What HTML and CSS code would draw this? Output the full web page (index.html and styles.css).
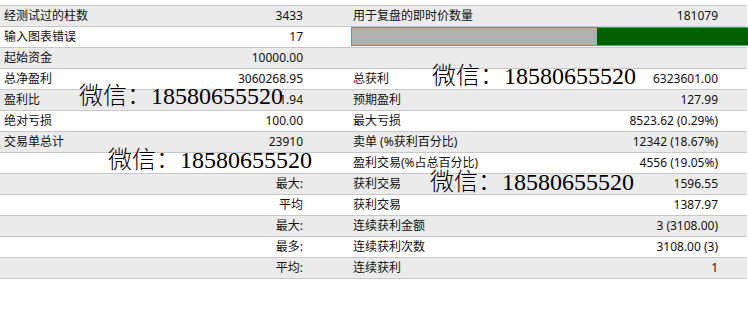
FILE: index.html
```html
<!DOCTYPE html>
<html lang="zh-CN">
<head>
<meta charset="utf-8">
<title>测试报告</title>
<link rel="stylesheet" href="styles.css">
</head>
<body>
<div class="page">
  <div class="report">
    <div class="row alt"><span class="lbl">经测试过的柱数</span><span class="val">3433</span><span class="gap"></span><span class="lbl2">用于复盘的即时价数量</span><span class="val2">181079</span><span class="rest"></span></div>
    <div class="row"><span class="lbl">输入图表错误</span><span class="val">17</span><span class="gap"></span><div class="bar"><div class="bar-gray"></div><div class="bar-green"></div></div></div>
    <div class="row alt"><span class="lbl">起始资金</span><span class="val">10000.00</span><span class="gap"></span><span class="lbl2"></span><span class="val2"></span><span class="rest"></span></div>
    <div class="row"><span class="lbl">总净盈利</span><span class="val">3060268.95</span><span class="gap"></span><span class="lbl2">总获利</span><span class="val2">6323601.00</span><span class="rest"></span></div>
    <div class="row alt"><span class="lbl">盈利比</span><span class="val">1.94</span><span class="gap"></span><span class="lbl2">预期盈利</span><span class="val2">127.99</span><span class="rest"></span></div>
    <div class="row"><span class="lbl">绝对亏损</span><span class="val">100.00</span><span class="gap"></span><span class="lbl2">最大亏损</span><span class="val2">8523.62 (0.29%)</span><span class="rest"></span></div>
    <div class="row alt"><span class="lbl">交易单总计</span><span class="val">23910</span><span class="gap"></span><span class="lbl2">卖单 (%获利百分比)</span><span class="val2">12342 (18.67%)</span><span class="rest"></span></div>
    <div class="row"><span class="lbl"></span><span class="val"></span><span class="gap"></span><span class="lbl2">盈利交易(%占总百分比)</span><span class="val2">4556 (19.05%)</span><span class="rest"></span></div>
    <div class="row alt"><span class="lbl"></span><span class="val">最大:</span><span class="gap"></span><span class="lbl2">获利交易</span><span class="val2">1596.55</span><span class="rest"></span></div>
    <div class="row"><span class="lbl"></span><span class="val">平均</span><span class="gap"></span><span class="lbl2">获利交易</span><span class="val2">1387.97</span><span class="rest"></span></div>
    <div class="row alt"><span class="lbl"></span><span class="val">最大:</span><span class="gap"></span><span class="lbl2">连续获利金额</span><span class="val2">3 (3108.00)</span><span class="rest"></span></div>
    <div class="row"><span class="lbl"></span><span class="val">最多:</span><span class="gap"></span><span class="lbl2">连续获利次数</span><span class="val2">3108.00 (3)</span><span class="rest"></span></div>
    <div class="row alt"><span class="lbl"></span><span class="val">平均:</span><span class="gap"></span><span class="lbl2">连续获利</span><span class="val2">1</span><span class="rest"></span></div>
  </div>
  <div class="wm wm1">微信：18580655520</div>
  <div class="wm wm2">微信：18580655520</div>
  <div class="wm wm3">微信：18580655520</div>
  <div class="wm wm4">微信：18580655520</div>
</div>
</body>
</html>
```
FILE: styles.css
```css
html, body {
  margin: 0;
  padding: 0;
  background: #ffffff;
  overflow: hidden;
}
.page {
  position: relative;
  width: 748px;
  height: 329px;
  padding-top: 5px;
  box-sizing: border-box;
}
.report {
  width: 747px;
  border-top: 1px solid #c8c8c8;
  font-family: "Noto Sans", "Noto Sans CJK SC", sans-serif;
  font-size: 12px;
  color: #111111;
}
.row {
  display: grid;
  grid-template-columns: 180px 119px 48px 250px 117px 29px;
  padding-left: 4px;
  height: 20px;
  border-bottom: 1px solid #c8c8c8;
  background: #ffffff;
  align-items: center;
  line-height: 20px;
  white-space: nowrap;
}
.row.alt {
  background: #ebebeb;
}
.lbl {
  text-align: left;
}
.val, .val2 {
  text-align: right;
}
.lbl2 {
  padding-left: 2px;
}
.bar {
  grid-column: 4 / 7;
  margin-right: -3px;
  align-self: start;
  height: 19px;
  box-sizing: border-box;
  border: 1px solid #3d97ea;
  display: flex;
}
.bar-gray {
  width: 245px;
  background: #b0b0b0;
}
.bar-green {
  flex: 1;
  background: #005f00;
}
.wm {
  position: absolute;
  font-family: "Liberation Serif", "Noto Sans CJK SC", serif;
  font-size: 24px;
  font-weight: 300;
  line-height: 24px;
  color: #000000;
  white-space: nowrap;
}
.wm1 { left: 79px; top: 84px; }
.wm2 { left: 432px; top: 64px; }
.wm3 { left: 108px; top: 148px; }
.wm4 { left: 430px; top: 170px; }
```
